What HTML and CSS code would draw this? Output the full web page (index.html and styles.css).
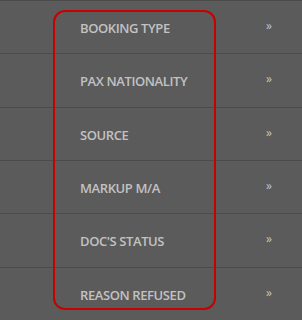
FILE: index.html
```html
<!DOCTYPE html>
<html lang="en">
<head>
    <meta charset="UTF-8">
    <title>Filters</title>
    <link rel="stylesheet" href="styles.css">
</head>
<body>

<div class="menu">
    <div class="row"><span class="label">BOOKING TYPE</span><span class="arrow">&raquo;</span></div>
    <div class="row"><span class="label">PAX NATIONALITY</span><span class="arrow">&raquo;</span></div>
    <div class="row"><span class="label">SOURCE</span><span class="arrow">&raquo;</span></div>
    <div class="row"><span class="label">MARKUP M/A</span><span class="arrow">&raquo;</span></div>
    <div class="row"><span class="label">DOC'S STATUS</span><span class="arrow">&raquo;</span></div>
    <div class="row"><span class="label">REASON REFUSED</span><span class="arrow">&raquo;</span></div>
    <div class="highlight"></div>
</div>

</body>
</html>
```

FILE: styles.css
```css
html, body {
    margin: 0;
    padding: 0;
    background-color: #5b5b5b;
}

body {
    font-family: 'Open Sans', 'Segoe UI', sans-serif;
    width: 302px;
    height: 320px;
    overflow: hidden;
}

.menu {
    position: relative;
    height: 320px;
}

.row {
    box-sizing: border-box;
    height: 53.33px;
    border-top: 1px solid #4b4b4b;
    display: flex;
    align-items: center;
    padding: 2px 0 0 80px;
}

.label {
    flex: 1;
    font-size: 13px;
    font-weight: 600;
    letter-spacing: -0.4px;
    color: #c2c2c2;
}

.arrow {
    width: 36px;
    font-size: 12px;
    color: #c4c4c4;
    margin-top: -5px;
}

.highlight {
    position: absolute;
    left: 53px;
    top: 10px;
    width: 163px;
    height: 300px;
    box-sizing: border-box;
    border: 2px solid #c70000;
    border-radius: 12px;
}
```
